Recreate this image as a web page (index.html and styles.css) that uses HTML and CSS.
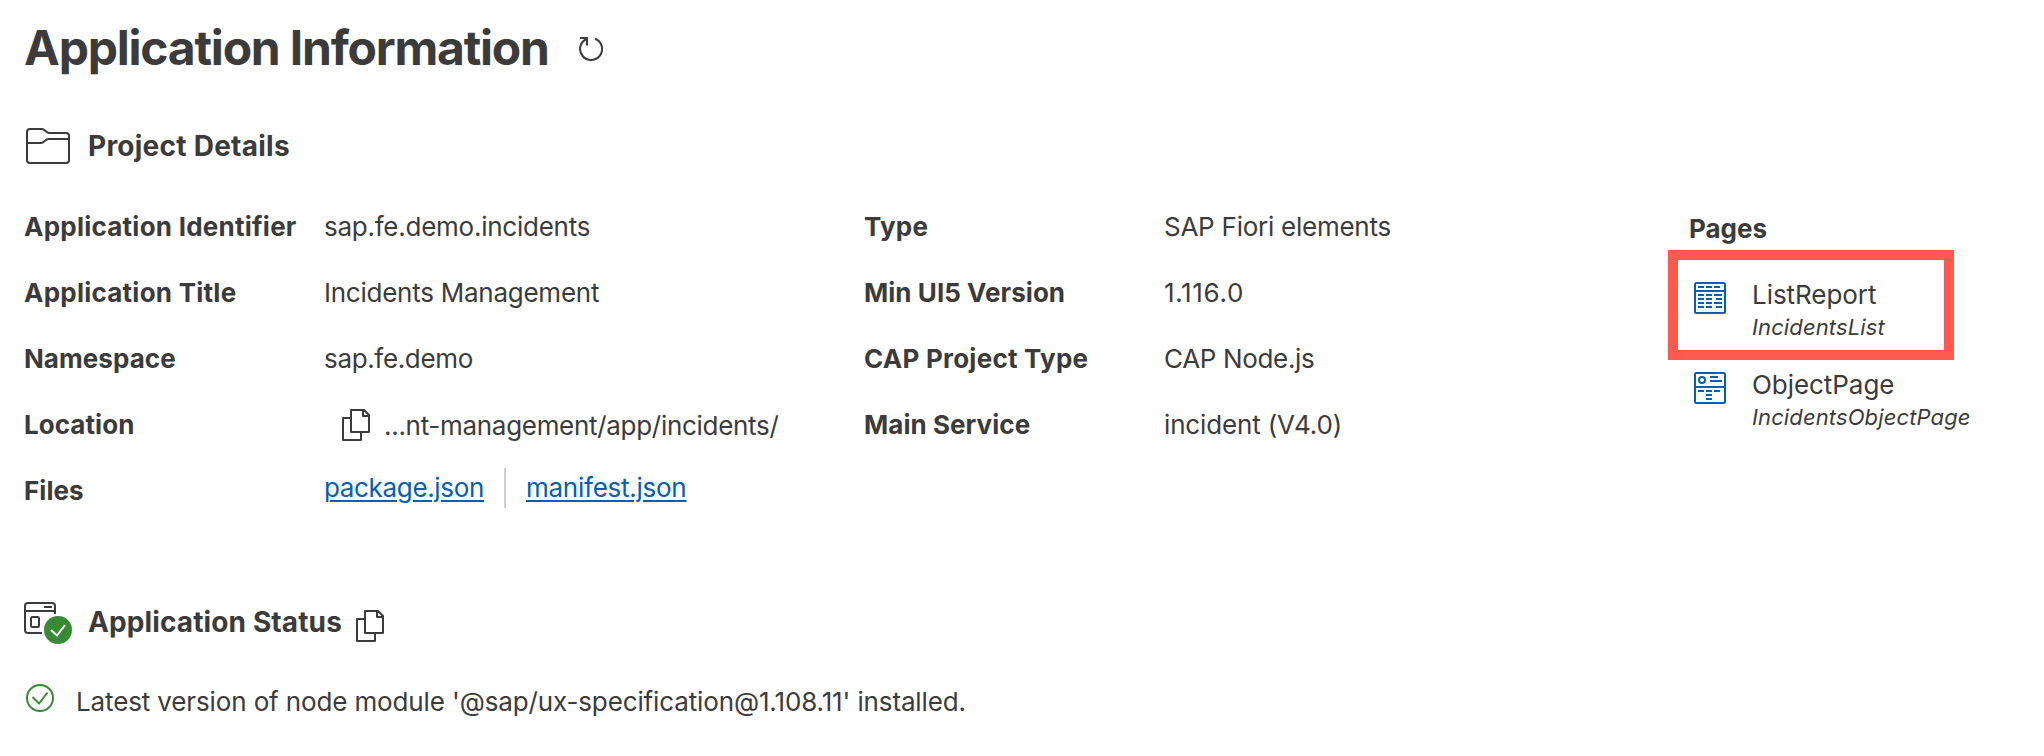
FILE: index.html
```html
<!DOCTYPE html>
<html lang="en">
<head>
<meta charset="utf-8">
<title>Application Information</title>
<link rel="stylesheet" href="styles.css">
</head>
<body>
<svg class="defs" aria-hidden="true">
  <symbol id="copy" viewBox="0 0 28 32">
    <path d="M9 9H1v22h18v-7M9 1h13l5 5v17H9zM21 1v6h6" fill="none" stroke="currentColor" stroke-width="2" stroke-linejoin="round"/>
  </symbol>
</svg>
<main class="page">
  <header class="title-bar">
    <h1 class="title">Application Information</h1>
    <svg class="refresh" viewBox="0 0 24 28"><path d="M16 3.700A11 11 0 1 1 7.500 4M1 3H8V10.500" fill="none" stroke="currentColor" stroke-width="2"/></svg>
  </header>

  <section class="project">
    <div class="section-head">
      <svg class="folder" viewBox="0 0 44 36"><path d="M1 4a3 3 0 0 1 3-3h12c2.500 0 4.500 4 7 4h17a3 3 0 0 1 3 3v24a3 3 0 0 1-3 3H4a3 3 0 0 1-3-3zM1 15h14c3 0 4.500-4 7.500-4H43" fill="none" stroke="currentColor" stroke-width="2"/></svg>
      <h2 class="heading">Project Details</h2>
    </div>
    <div class="details">
      <dl class="facts facts-main">
        <dt>Application Identifier</dt><dd>sap.fe.demo.incidents</dd>
        <dt>Application Title</dt><dd>Incidents Management</dd>
        <dt class="plain">Namespace</dt><dd class="tight">sap.fe.demo</dd>
        <dt class="plain">Location</dt><dd class="location"><svg class="copy"><use href="#copy"/></svg><span class="path">...nt-management/app/incidents/</span></dd>
        <dt class="plain">Files</dt><dd class="files"><a class="tight" href="#">package.json</a><i class="divider"></i><a href="#">manifest.json</a></dd>
      </dl>
      <dl class="facts facts-side">
        <dt>Type</dt><dd>SAP Fiori elements</dd>
        <dt class="plain">Min UI5 Version</dt><dd class="version">1.116.0</dd>
        <dt>CAP Project Type</dt><dd class="tight">CAP Node.js</dd>
        <dt class="plain">Main Service</dt><dd class="service">incident (V4.0)</dd>
      </dl>
      <aside class="pages">
        <h3 class="pages-title">Pages</h3>
        <div class="entry selected">
          <svg class="entry-icon" viewBox="0 0 32 32"><rect x="1" y="1" width="30" height="30" rx="1.5"/><path d="M1 9h30M4 5h6M12 5h6M20 5h6M4 13h6M12 13h6M20 13h8M4 17h6M12 17h6M22 17h6M4 21h6M12 21h6M20 21h8M4 25h6M12 25h6M22 25h6"/></svg>
          <div class="entry-text"><span class="name">ListReport</span><span class="kind">IncidentsList</span></div>
        </div>
        <div class="entry">
          <svg class="entry-icon" viewBox="0 0 32 32"><rect x="1" y="1" width="30" height="30" rx="1.5"/><circle cx="8" cy="8" r="3"/><path d="M1 15h30M16 5h8M16 9h12M4 19h6M12 19h6M20 19h6M12 23h6M12 27h6"/></svg>
          <div class="entry-text"><span class="name">ObjectPage</span><span class="kind">IncidentsObjectPage</span></div>
        </div>
      </aside>
    </div>
  </section>

  <section class="status">
    <div class="section-head">
      <svg class="app" viewBox="0 0 48 42"><path d="M18 31H4a3 3 0 0 1-3-3V4a3 3 0 0 1 3-3h24a3 3 0 0 1 3 3v8M1 9h30M20 5h8" fill="none" stroke="currentColor" stroke-width="2"/><rect x="7" y="15" width="8" height="10" rx="1.5" fill="none" stroke="currentColor" stroke-width="2"/><circle cx="34" cy="28" r="14" fill="#388a34"/><path d="M27 28l6 5.500 8-10.500" fill="none" stroke="#fff" stroke-width="2"/></svg>
      <h2 class="heading">Application Status</h2>
      <svg class="copy"><use href="#copy"/></svg>
    </div>
    <p class="message">
      <svg class="ok" viewBox="0 0 28 28"><circle cx="14" cy="14" r="13"/><path d="M6.500 13l6.500 6.500 8.500-11"/></svg>
      <span>Latest version of node module '@sap/ux-specification@1.108.11' installed.</span>
    </p>
  </section>
</main>
</body>
</html>
```
FILE: styles.css
```css
* { box-sizing: border-box; }
body { margin: 0; background: #fff; color: #3b3b3b; font: 26px/66px Inter, "Liberation Sans", sans-serif; }
h1, h2, h3, dl, dt, dd, p { margin: 0; }
svg { display: block; flex: none; }
.defs { width: 0; height: 0; position: absolute; }
.page { width: 2044px; height: 756px; overflow: hidden; padding: 18px 0 0 24px; }

/* Page title */
.title-bar { display: flex; height: 60px; }
.title { width: 555px; font-size: 48px; line-height: 60px; letter-spacing: -1.21px; white-space: nowrap; }
.refresh { width: 24px; height: 28px; margin-top: 17px; }

/* Section headings */
.section-head { display: flex; align-items: flex-start; height: 44px; }
.heading { font-size: 28px; line-height: 44px; letter-spacing: .25px; white-space: nowrap; }
.copy { width: 28px; height: 32px; }

/* Project details */
.project .section-head { height: 70px; margin-top: 46px; }
.folder { width: 44px; height: 36px; margin: 4px 18px 0 2px; }
.details { display: flex; }
.facts { display: grid; grid-template-columns: 300px 1fr; grid-auto-rows: 66px; align-content: start; white-space: nowrap; }
.facts-main { width: 840px; }
.facts-side { width: 825px; }
dt { font-weight: 700; letter-spacing: .24px; }
dt.plain { letter-spacing: .05px; }
dd { letter-spacing: -.25px; }
.tight { letter-spacing: -.34px; }
.version { letter-spacing: .65px; }
.service { letter-spacing: -.15px; }
.location, .files { display: flex; align-items: center; }
.location .copy { margin: 0 14px 0 18px; }
.path { line-height: 64px; padding-top: 2px; letter-spacing: -.3px; }
.files { height: 60px; }
a { color: #005fb8; text-decoration-thickness: 2px; text-underline-offset: 3px; }
.divider { width: 2px; height: 40px; margin: 0 20px; background: #cecece; }

/* Pages */
.pages-title { height: 66px; padding-top: 2px; font-size: 26px; line-height: 66px; }
.entry { display: flex; width: 266px; height: 90px; margin-left: -11px; padding-left: 16px; }
.entry-icon { width: 32px; height: 32px; margin: 22px 26px 0 0; fill: none; stroke: #005fb8; stroke-width: 2; }
.entry-text { display: flex; flex-direction: column; align-items: flex-start; padding-top: 17px; }
.name { line-height: 35px; letter-spacing: -.05px; }
.kind { font-size: 22px; line-height: 30px; font-style: italic; letter-spacing: .12px; }
.selected { outline: 10px solid #ff5a4d; }

/* Application status */
.status { margin-top: 78px; }
.app { width: 48px; height: 42px; margin-right: 16px; }
.status .heading { line-height: 41px; letter-spacing: .12px; }
.status .copy { margin: 8px 0 0 14px; }
.message { display: flex; margin-top: 38px; line-height: 35px; letter-spacing: -.13px; }
.ok { width: 28px; height: 28px; margin: 0 22px 0 2px; fill: none; stroke: #388a34; stroke-width: 2; }
```
